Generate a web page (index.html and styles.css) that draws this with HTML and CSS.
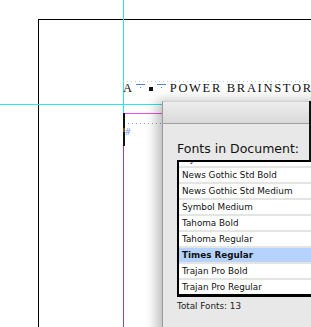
FILE: index.html
```html
<!DOCTYPE html>
<html>
<head>
<meta charset="utf-8">
<link rel="stylesheet" href="styles.css">
</head>
<body>
<div class="canvas">
  <div class="page"></div>
  <div class="guide-v"></div>
  <div class="guide-h"></div>
  <div class="margin-h"></div>
  <div class="margin-v"></div>
  <div class="cursor"></div>
  <div class="frame-top"></div>
  <div class="headline">
    <span class="cap">A</span><span class="dash"></span><span class="sq"></span><span class="dash"></span><span class="words">POWER BRAINSTORM</span>
  </div>
  <div class="frame-dots"></div>
  <div class="hash">#</div>

  <div class="dialog">
    <div class="titlebar"></div>
    <div class="rule"></div>
    <div class="body">
      <div class="label">Fonts in Document:</div>
      <div class="list">
        <div class="rows">
          <div class="row">Myriad Pro Bold</div>
          <div class="row">News Gothic Std Bold</div>
          <div class="row">News Gothic Std Medium</div>
          <div class="row">Symbol Medium</div>
          <div class="row">Tahoma Bold</div>
          <div class="row">Tahoma Regular</div>
          <div class="row selected">Times Regular</div>
          <div class="row">Trajan Pro Bold</div>
          <div class="row">Trajan Pro Regular</div>
        </div>
      </div>
      <div class="total">Total Fonts: 13</div>
    </div>
  </div>
</div>
</body>
</html>
```
FILE: styles.css
```css
html, body {
  margin: 0;
  padding: 0;
  background: #ffffff;
}
.canvas {
  position: relative;
  width: 311px;
  height: 327px;
  overflow: hidden;
  background: #ffffff;
}
.page {
  position: absolute;
  left: 38px;
  top: 19px;
  width: 400px;
  height: 400px;
  border-top: 1px solid #000;
  border-left: 1px solid #000;
}
.guide-v {
  position: absolute;
  left: 123px;
  top: 0;
  width: 1px;
  height: 113px;
  background: #22e8f0;
}
.guide-h {
  position: absolute;
  left: 0;
  top: 104px;
  width: 162px;
  height: 1px;
  background: #22e8f0;
}
.margin-h {
  position: absolute;
  left: 123px;
  top: 113px;
  width: 39px;
  height: 1px;
  background: #e84fe8;
}
.margin-v {
  position: absolute;
  left: 123px;
  top: 113px;
  width: 1px;
  height: 220px;
  background: #8a3fd8;
}
.cursor {
  position: absolute;
  left: 123px;
  top: 113px;
  width: 2px;
  height: 33px;
  background: linear-gradient(#111 0 45%, #7a4a10 45% 58%, #111 58%);
}
.frame-top {
  position: absolute;
  left: 123px;
  top: 81px;
  width: 188px;
  height: 1px;
  background: repeating-linear-gradient(90deg, #b8d0f2 0 1px, transparent 1px 4px);
}
.headline {
  position: absolute;
  left: 123px;
  top: 81px;
  white-space: nowrap;
  font-family: "Liberation Serif", "DejaVu Serif", serif;
  font-size: 12.5px;
  line-height: 14px;
  color: #111;
  letter-spacing: 1.7px;
  display: flex;
  align-items: center;
}
.cap {
  display: inline-block;
}
.dash {
  display: inline-block;
  position: relative;
  width: 9px;
  height: 6px;
  margin: 0 3px 0 2px;
  border-top: 1px solid #4f86e0;
  align-self: flex-start;
  margin-top: 3px;
}
.dash::after {
  content: "";
  position: absolute;
  left: 4px;
  top: 2px;
  width: 1px;
  height: 1px;
  background: #4f86e0;
}
.sq {
  display: inline-block;
  width: 4px;
  height: 4px;
  background: #111;
  margin: 2px 2px 0 1px;
}
.words {
  margin-left: 1px;
}
.frame-dots {
  position: absolute;
  left: 128px;
  top: 123px;
  width: 34px;
  height: 1px;
  background: repeating-linear-gradient(90deg, #7fa3e4 0 1px, transparent 1px 4px);
}
.hash {
  position: absolute;
  left: 124px;
  top: 126px;
  font-family: "DejaVu Sans", sans-serif;
  font-size: 9px;
  line-height: 12px;
  color: #7ea6ea;
  font-style: italic;
}
.dialog {
  position: absolute;
  left: 162px;
  top: 101px;
  width: 170px;
  height: 240px;
  background: #e8e8e8;
  border-left: 1px solid #9c9c9c;
  box-shadow: -5px 0 12px rgba(0, 0, 0, 0.28);
  display: flex;
  flex-direction: column;
}
.titlebar {
  height: 21px;
  background: linear-gradient(#ededed, #d9d9d9);
  border-top: 1px solid #d0d0d0;
  border-bottom: 1px solid #9f9f9f;
}
.rule {
  position: absolute;
  left: 146px;
  top: 0;
  width: 2px;
  height: 60px;
  background: #111;
}
.body {
  display: flex;
  flex-direction: column;
  padding: 17px 0 0 14px;
}
.label {
  font-family: "DejaVu Sans", sans-serif;
  font-size: 12.5px;
  line-height: 15px;
  color: #111;
  height: 19px;
}
.list {
  width: 200px;
  height: 132px;
  border: 2px solid #000;
  border-bottom-width: 3px;
  background: #fff;
  overflow: hidden;
}
.rows {
  margin-top: -10px;
}
.row {
  height: 14px;
  line-height: 14px;
  border-bottom: 2px solid #e4e4e4;
  padding-left: 3px;
  font-family: "DejaVu Sans", sans-serif;
  font-size: 8.8px;
  color: #111;
  white-space: nowrap;
}
.row.selected {
  background: #b5d3fd;
  font-weight: bold;
}
.total {
  margin-top: 3px;
  font-family: "DejaVu Sans", sans-serif;
  font-size: 8.8px;
  line-height: 12px;
  color: #222;
}
```
